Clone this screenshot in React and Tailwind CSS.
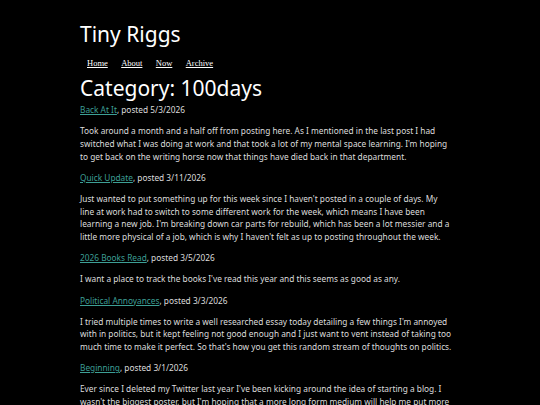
import React from 'react';

// summaries are split the way the original page wraps them
const posts = [
    {
        title: 'Back At It',
        date: '5/3/2026',
        lines: [
            'Took around a month and a half off from posting here. As I mentioned in the last post I had',
            "switched what I was doing at work and that took a lot of my mental space learning. I'm hoping",
            'to get back on the writing horse now that things have died back in that department.',
        ],
    },
    {
        title: 'Quick Update',
        date: '3/11/2026',
        lines: [
            "Just wanted to put something up for this week since I haven't posted in a couple of days. My",
            'line at work had to switch to some different work for the week, which means I have been',
            "learning a new job. I'm breaking down car parts for rebuild, which has been a lot messier and a",
            "little more physical of a job, which is why I haven't felt as up to posting throughout the week.",
        ],
    },
    {
        title: '2026 Books Read',
        date: '3/5/2026',
        lines: ["I want a place to track the books I've read this year and this seems as good as any."],
    },
    {
        title: 'Political Annoyances',
        date: '3/3/2026',
        lines: [
            "I tried multiple times to write a well researched essay today detailing a few things I'm annoyed",
            'with in politics, but it kept feeling not good enough and I just want to vent instead of taking too',
            "much time to make it perfect. So that's how you get this random stream of thoughts on politics.",
        ],
    },
    {
        title: 'Beginning',
        date: '3/1/2026',
        lines: [
            "Ever since I deleted my Twitter last year I've been kicking around the idea of starting a blog. I",
            "wasn't the biggest poster, but I'm hoping that a more long form medium will help me put more",
            'of my thoughts down somewhere and keep me writing on a regular basis.',
        ],
    },
];

const navItems = ['Home', 'About', 'Now', 'Archive'];

export default function App() {
    return (
        <div className="min-h-screen bg-black text-[#dcdcdc] font-['Noto_Sans',sans-serif]">
            <div className="mx-auto w-[380px] pt-[19.6px]">
                <h1 className="text-[21px] leading-[28.6px] text-white">Tiny Riggs</h1>

                <nav className="mt-[8.6px] flex gap-[13.4px] pl-[7px] font-['Liberation_Serif',serif] text-[8.5px] leading-[12.75px] text-white">
                    {navItems.map((item) => (
                        <a key={item} href="#" className="underline">
                            {item}
                        </a>
                    ))}
                </nav>

                <h2 className="mt-[4px] text-[21px] leading-[28.6px] text-white">Category: 100days</h2>

                <div className="mt-[1.8px] text-[8.3px] leading-[12.75px]">
                    {posts.map((post) => (
                        <div key={post.title}>
                            <p className="mb-[8.4px]">
                                <a href="#" className="text-[#3d9f95] underline">
                                    {post.title}
                                </a>
                                , posted {post.date}
                            </p>
                            <p className="mb-[8.4px]">
                                {post.lines.map((line, i) => (
                                    <span key={i} className="block whitespace-nowrap">
                                        {line}
                                    </span>
                                ))}
                            </p>
                        </div>
                    ))}
                </div>
            </div>
        </div>
    );
}
